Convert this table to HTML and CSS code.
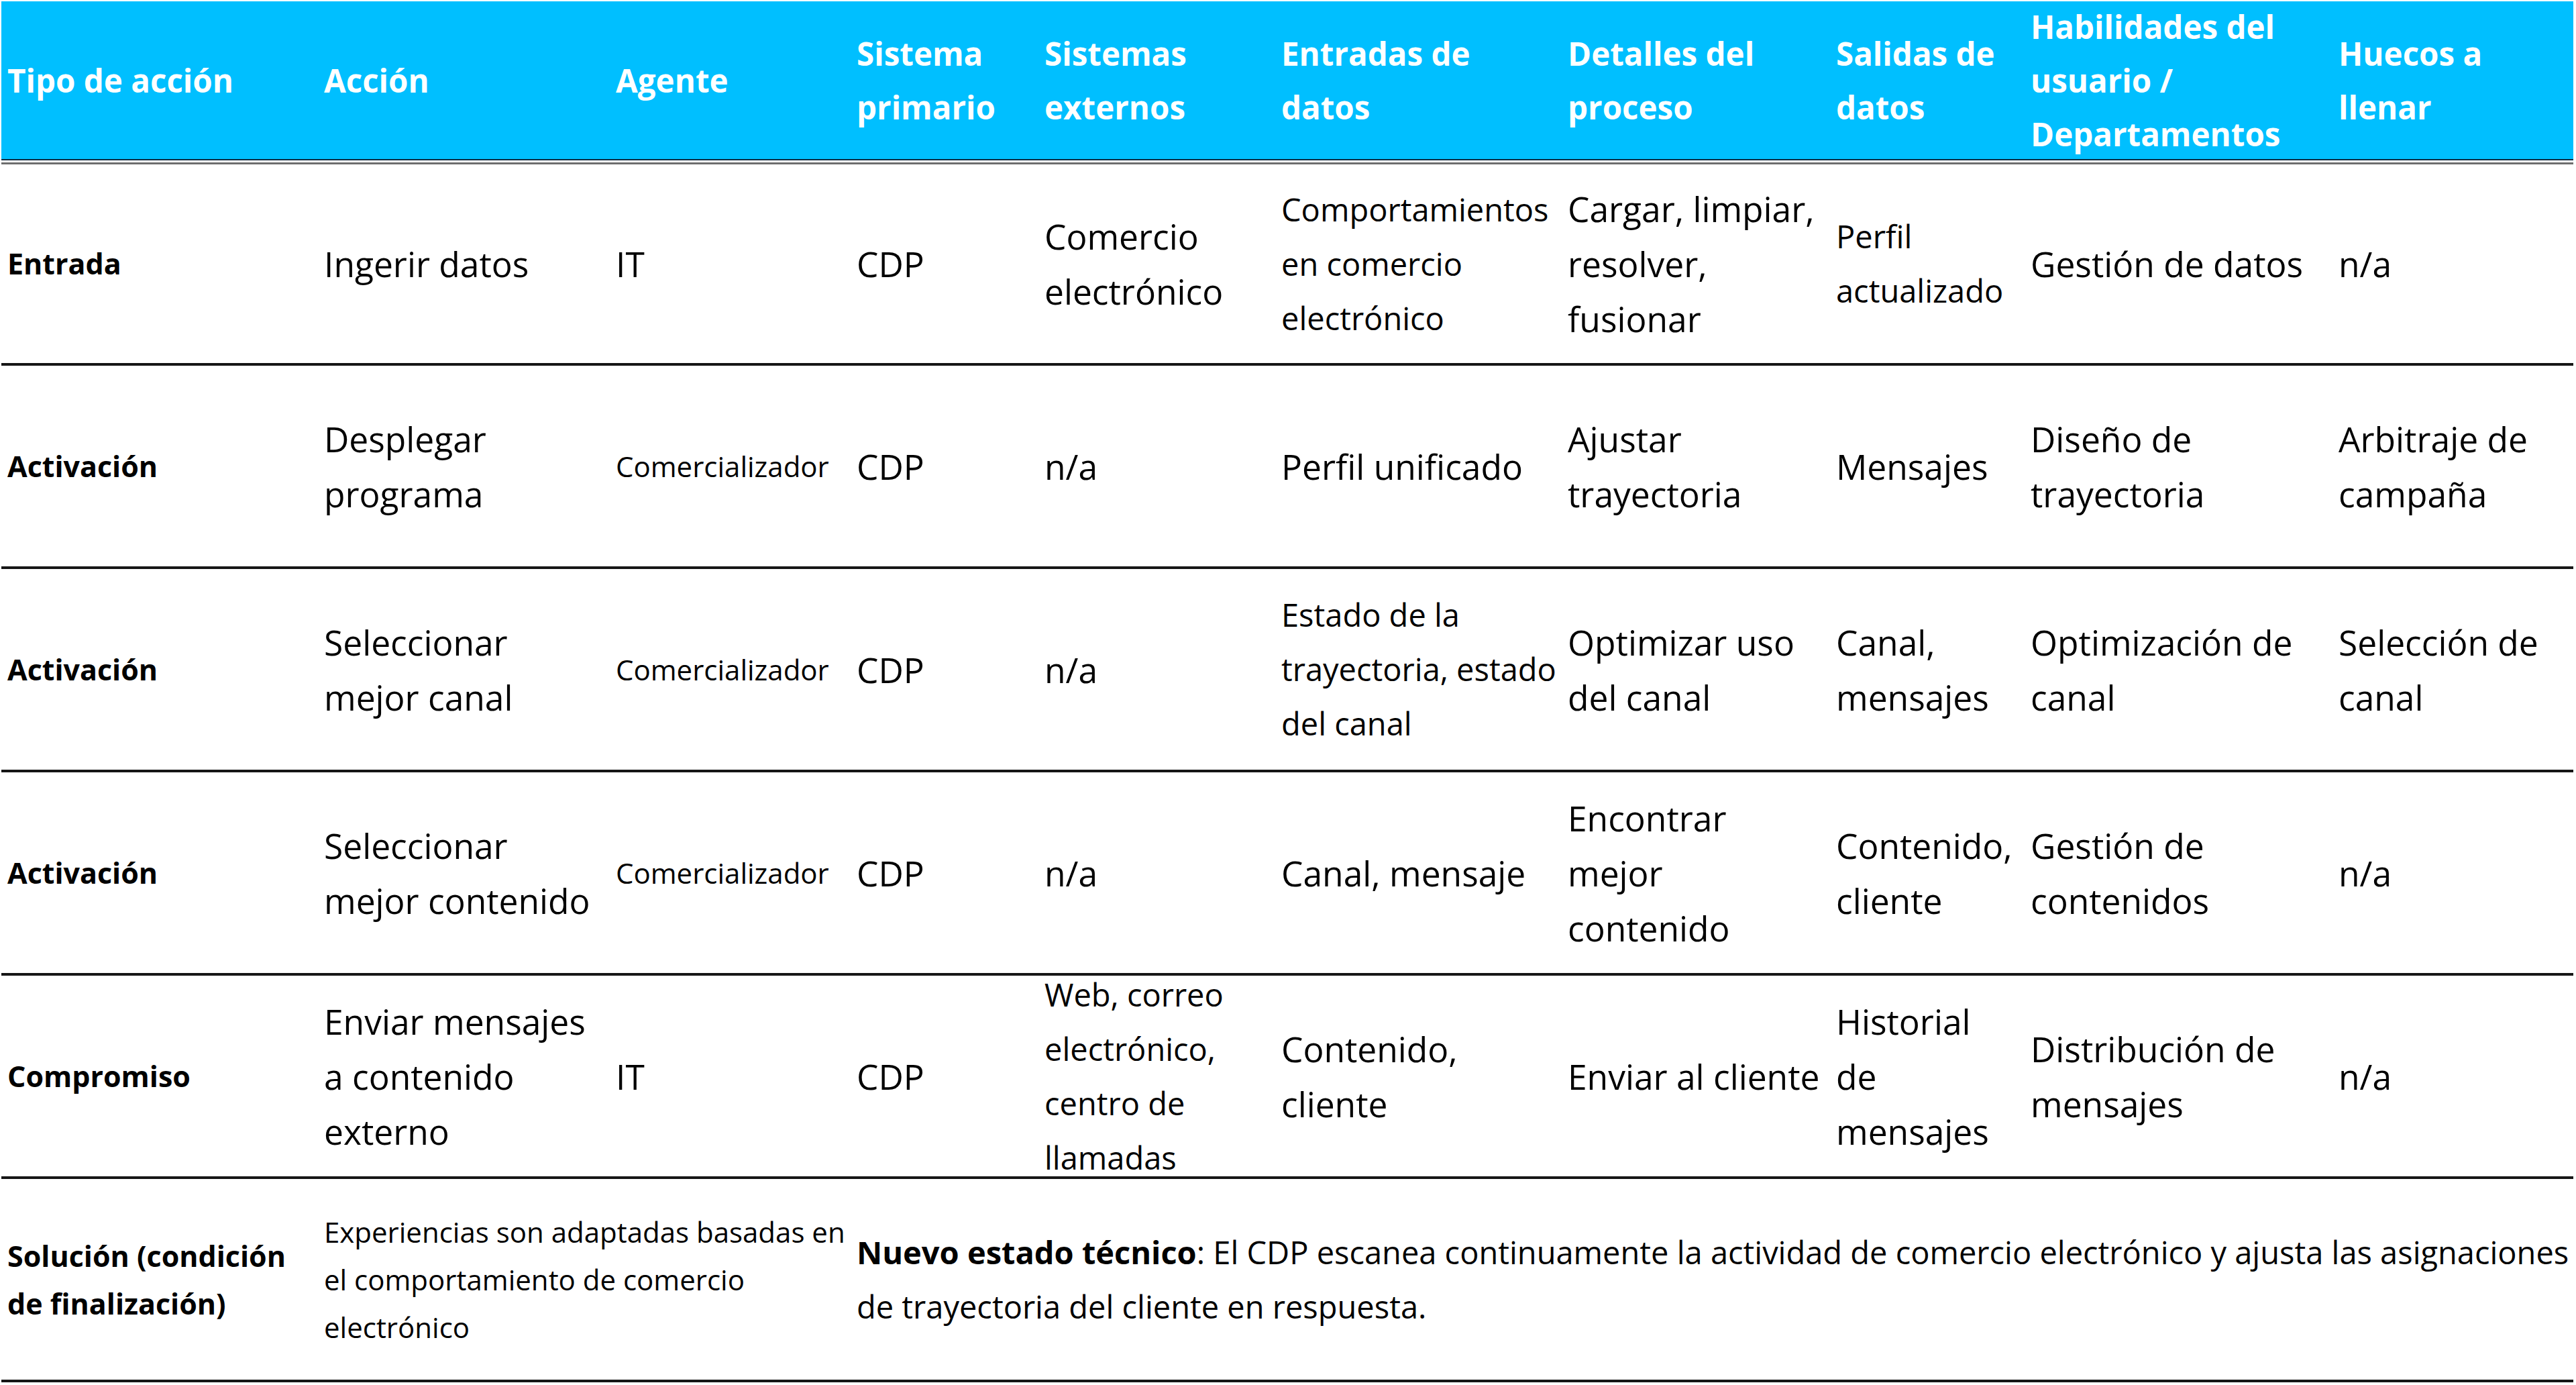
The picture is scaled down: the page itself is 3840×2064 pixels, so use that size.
FILE: index.html
```html
<!DOCTYPE html>
<html lang="es">
<head>
<meta charset="utf-8">
<title>Tabla de acciones</title>
<link rel="stylesheet" href="styles.css">
</head>
<body>
<div class="grid">
  <div class="cell hd c1">Tipo de acción</div>
  <div class="cell hd">Acción</div>
  <div class="cell hd">Agente</div>
  <div class="cell hd">Sistema<br>primario</div>
  <div class="cell hd">Sistemas<br>externos</div>
  <div class="cell hd">Entradas de<br>datos</div>
  <div class="cell hd">Detalles del<br>proceso</div>
  <div class="cell hd">Salidas de<br>datos</div>
  <div class="cell hd">Habilidades del<br>usuario /<br>Departamentos</div>
  <div class="cell hd">Huecos a<br>llenar</div>

  <div class="cell first type c1">Entrada</div>
  <div class="cell first">Ingerir datos</div>
  <div class="cell first">IT</div>
  <div class="cell first">CDP</div>
  <div class="cell first">Comercio<br>electrónico</div>
  <div class="cell first sm">Comportamientos<br>en comercio<br>electrónico</div>
  <div class="cell first">Cargar, limpiar,<br>resolver,<br>fusionar</div>
  <div class="cell first sm">Perfil<br>actualizado</div>
  <div class="cell first">Gestión de datos</div>
  <div class="cell first">n/a</div>

  <div class="cell type c1">Activación</div>
  <div class="cell">Desplegar<br>programa</div>
  <div class="cell xs">Comercializador</div>
  <div class="cell">CDP</div>
  <div class="cell">n/a</div>
  <div class="cell">Perfil unificado</div>
  <div class="cell">Ajustar<br>trayectoria</div>
  <div class="cell">Mensajes</div>
  <div class="cell">Diseño de<br>trayectoria</div>
  <div class="cell">Arbitraje de<br>campaña</div>

  <div class="cell type c1">Activación</div>
  <div class="cell">Seleccionar<br>mejor canal</div>
  <div class="cell xs">Comercializador</div>
  <div class="cell">CDP</div>
  <div class="cell">n/a</div>
  <div class="cell sm">Estado de la<br>trayectoria, estado<br>del canal</div>
  <div class="cell">Optimizar uso<br>del canal</div>
  <div class="cell">Canal,<br>mensajes</div>
  <div class="cell">Optimización de<br>canal</div>
  <div class="cell">Selección de<br>canal</div>

  <div class="cell type c1">Activación</div>
  <div class="cell">Seleccionar<br>mejor contenido</div>
  <div class="cell xs">Comercializador</div>
  <div class="cell">CDP</div>
  <div class="cell">n/a</div>
  <div class="cell">Canal, mensaje</div>
  <div class="cell">Encontrar<br>mejor<br>contenido</div>
  <div class="cell">Contenido,<br>cliente</div>
  <div class="cell">Gestión de<br>contenidos</div>
  <div class="cell">n/a</div>

  <div class="cell type c1">Compromiso</div>
  <div class="cell">Enviar mensajes<br>a contenido<br>externo</div>
  <div class="cell">IT</div>
  <div class="cell">CDP</div>
  <div class="cell sm">Web, correo<br>electrónico,<br>centro de<br>llamadas</div>
  <div class="cell">Contenido,<br>cliente</div>
  <div class="cell">Enviar al cliente</div>
  <div class="cell">Historial<br>de<br>mensajes</div>
  <div class="cell">Distribución de<br>mensajes</div>
  <div class="cell">n/a</div>

  <div class="cell type sol c1">Solución (condición<br>de finalización)</div>
  <div class="cell xs sol span2">Experiencias son adaptadas basadas en<br>el comportamiento de comercio<br>electrónico</div>
  <div class="cell sm span7"><span><b>Nuevo estado técnico</b>: El CDP escanea continuamente la actividad de comercio electrónico y ajusta las asignaciones<br>de trayectoria del cliente en respuesta.</span></div>
</div>
</body>
</html>
```

FILE: styles.css
```css
* {
  box-sizing: border-box;
}

html,
body {
  margin: 0;
  background: #ffffff;
}

body {
  font-family: "Open Sans", "Noto Sans", sans-serif;
  color: #000000;
}

.grid {
  display: grid;
  grid-template-columns: 477px 435px 359px 280px 353px 427px 400px 290px 459px 354px;
  grid-template-rows: 237px 306px repeat(5, 303px);
  width: 3834px;
  margin: 2px 0 0 2px;
}

.cell {
  display: flex;
  align-items: center;
  padding-left: 4px;
  white-space: nowrap;
  border-bottom: 4px solid #161616;
  font-size: 51.5px;
  line-height: 82px;
}

.c1 {
  padding-left: 9px;
}

.hd {
  background: #00bfff;
  color: #ffffff;
  font-weight: 700;
  font-size: 47.5px;
  line-height: 80px;
  border-bottom: 2px solid #0e2a40;
}

.first {
  padding-top: 6px;
  box-shadow: inset 0 3px #ffffff, inset 0 6px #6e6e6e;
}

.type {
  font-weight: 700;
  font-size: 43px;
}

.sm {
  font-size: 47px;
  line-height: 81px;
}

.xs {
  font-size: 42px;
}

.sol {
  line-height: 71px;
}

.span2 {
  grid-column: span 2;
}

.span7 {
  grid-column: span 7;
}
```
